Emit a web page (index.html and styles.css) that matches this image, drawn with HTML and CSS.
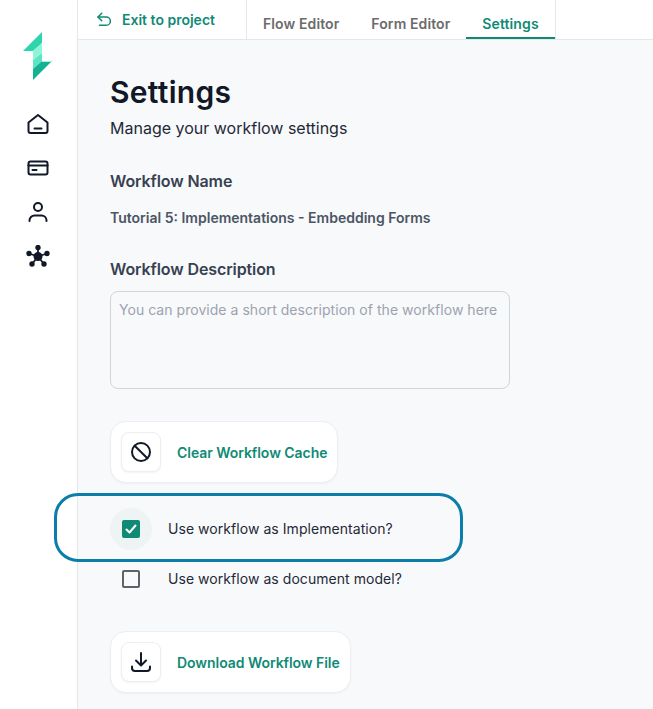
FILE: index.html
```html
<!DOCTYPE html>
<html lang="en">
<head>
<meta charset="utf-8">
<title>Settings</title>
<link rel="stylesheet" href="styles.css">
</head>
<body>
<div class="app">
  <aside class="sidebar">
    <svg class="logo" width="30" height="48" viewBox="0 0 30 48">
      <polygon points="19,0 0,19 10,19 19,11" fill="#2dd4ac"/>
      <polygon points="10,19 19,11 19,21 10,28" fill="#8df5d8"/>
      <polygon points="10,28 19,21 19,29 10,37" fill="#5ce5c4"/>
      <polygon points="10,37 19,29 29,29 10,48" fill="#14b294"/>
      <polygon points="19,29 29,29 28,30 19,30" fill="#a5f3e0"/>
    </svg>
    <nav class="side-nav">
      <svg class="side-icon" viewBox="0 0 24 24" fill="none" stroke="#111827" stroke-width="2" stroke-linecap="round" stroke-linejoin="round"><path d="M2.500 10.500 12 3l9.500 7.500V19a2 2 0 0 1-2 2h-15a2 2 0 0 1-2-2z"/><path d="M8.500 16.500h7"/></svg>
      <svg class="side-icon" viewBox="0 0 24 24" fill="none" stroke="#111827" stroke-width="2" stroke-linecap="round" stroke-linejoin="round"><rect x="2.500" y="5.500" width="19" height="13" rx="2"/><path d="M2.500 9.500h19" stroke-width="2.200"/><path d="M6.500 14h4"/></svg>
      <svg class="side-icon" viewBox="0 0 24 24" fill="none" stroke="#111827" stroke-width="2" stroke-linecap="round" stroke-linejoin="round"><circle cx="12" cy="7" r="4"/><path d="M3.500 21v-.500a5 5 0 0 1 5-5h7a5 5 0 0 1 5 5v.500"/></svg>
      <svg class="side-icon network" viewBox="0 0 24 24" fill="#111827" stroke="#111827" stroke-width="1.800"><path d="M12 11.500V2.500M12 11.500 3 8.500M12 11.500l9-3M12 11.500l-6 7.500M12 11.500l6 7.500" fill="none"/><circle cx="12" cy="11.500" r="3.600"/><circle cx="12" cy="2.500" r="1.800"/><circle cx="3" cy="8.500" r="1.800"/><circle cx="21" cy="8.500" r="1.800"/><circle cx="6" cy="19" r="1.800"/><circle cx="18" cy="19" r="1.800"/></svg>
    </nav>
  </aside>
  <div class="content">
    <header class="topbar">
      <a class="exit">
        <svg width="18" height="18" viewBox="0 0 24 24" fill="none" stroke="#0f8a75" stroke-width="2" stroke-linecap="round" stroke-linejoin="round"><path d="M9 3 4 8l5 5"/><path d="M4 8h11a5.500 5.500 0 0 1 0 11H6"/></svg>
        <span>Exit to project</span>
      </a>
      <div class="tabs">
        <a class="tab">Flow Editor</a>
        <a class="tab">Form Editor</a>
        <a class="tab tab-active">Settings</a>
      </div>
    </header>
    <main class="main">
      <h1 class="title">Settings</h1>
      <p class="subtitle">Manage your workflow settings</p>
      <h2 class="label name-label">Workflow Name</h2>
      <p class="wf-name">Tutorial 5: Implementations - Embedding Forms</p>
      <h2 class="label desc-label">Workflow Description</h2>
      <textarea class="desc" placeholder="You can provide a short description of the workflow here"></textarea>
      <button class="action clear">
        <span class="action-icon"><svg width="24" height="24" viewBox="0 0 24 24" fill="none" stroke="#111827" stroke-width="2" stroke-linecap="round"><circle cx="12" cy="12" r="9"/><path d="M5.700 5.700l12.600 12.600"/></svg></span>
        <span class="action-text">Clear Workflow Cache</span>
      </button>
      <label class="check-row first">
        <span class="check-halo"><span class="box box-on"><svg width="14" height="14" viewBox="0 0 14 14" fill="none" stroke="#fff" stroke-width="2" stroke-linecap="round" stroke-linejoin="round"><path d="M2.500 7.500 5.500 10.500 11.500 3.500"/></svg></span></span>
        <span class="check-text">Use workflow as Implementation?</span>
      </label>
      <label class="check-row second">
        <span class="check-halo"><span class="box"></span></span>
        <span class="check-text">Use workflow as document model?</span>
      </label>
      <button class="action download">
        <span class="action-icon"><svg width="24" height="24" viewBox="0 0 24 24" fill="none" stroke="#111827" stroke-width="2" stroke-linecap="round" stroke-linejoin="round"><path d="M12 3v12M7 10.500l5 5 5-5"/><path d="M3 16.500v1.500a3 3 0 0 0 3 3h12a3 3 0 0 0 3-3v-1.500"/></svg></span>
        <span class="action-text">Download Workflow File</span>
      </button>
      <div class="highlight"></div>
    </main>
  </div>
</div>
</body>
</html>
```
FILE: styles.css
```css
* { box-sizing: border-box; }
html, body { margin: 0; height: 100%; overflow: hidden; }
body { font-family: Inter, "Liberation Sans", sans-serif; background: #fff; color: #111827; }
.app { display: flex; height: 709px; }
.sidebar { width: 78px; flex: none; background: #fff; border-right: 1px solid #e5e7eb; display: flex; flex-direction: column; align-items: center; padding: 32px 1px 0 0; }
.logo { display: block; }
.side-nav { display: flex; flex-direction: column; gap: 20px; margin-top: 32px; }
.side-icon { width: 24px; height: 24px; display: block; }
.network { margin-top: 1px; }
.content { flex: 1; min-width: 0; display: flex; flex-direction: column; background: #f8f9fb; }
.topbar { height: 40px; flex: none; background: #fff; border-bottom: 1px solid #e5e7eb; display: flex; }
.exit { width: 169px; display: flex; align-items: flex-start; gap: 9px; padding: 11px 0 0 17px; border-right: 1px solid #e5e7eb; color: #0f8a75; font-size: 14px; font-weight: 600; line-height: 18px; }
.tabs { display: flex; height: 39px; }
.tab { font-size: 14px; font-weight: 600; letter-spacing: .1px; color: #6b6b6b; line-height: 18px; padding: 15px 16px 0; }
.tab-active { color: #0f8a75; border-bottom: 2px solid #0f8a75; box-shadow: 1px 0 0 #e5e7eb; }
.main { flex: 1; position: relative; padding: 34px 0 0 32px; }
.title { margin: 0; font-size: 30px; font-weight: 600; line-height: 36px; letter-spacing: .3px; color: #111827; }
.subtitle { margin: 6px 0 0; font-size: 16px; line-height: 24px; color: #1f2937; }
.label { margin: 0; font-size: 16px; font-weight: 600; line-height: 24px; letter-spacing: -.1px; color: #374151; }
.name-label { margin-top: 29px; }
.wf-name { margin: 15px 0 0; font-size: 14px; font-weight: 600; line-height: 20px; color: #4b5563; }
.desc-label { margin-top: 29px; }
.desc { display: block; margin-top: 10px; width: 400px; height: 98px; padding: 8px; border: 1px solid #d1d5db; border-radius: 8px; background: transparent; font: 400 14px/20px Inter, sans-serif; letter-spacing: .04px; resize: none; }
.desc::placeholder { color: #9ca3af; opacity: 1; }
.action { display: flex; align-items: center; gap: 16px; height: 62px; padding: 0 10px; background: #fff; border: 1px solid #eceef1; border-radius: 16px; font-family: inherit; font-size: 14px; font-weight: 600; letter-spacing: -.05px; color: #0f8a75; box-shadow: 0 1px 2px rgba(0,0,0,.04); }
.clear { margin-top: 32px; }
.download { margin-top: 31px; }
.action-icon { width: 40px; height: 40px; display: flex; align-items: center; justify-content: center; background: #fff; border: 1px solid #eceef1; border-radius: 8px; box-shadow: 0 1px 2px rgba(0,0,0,.05); }
.action-icon svg { display: block; }
.check-row { display: flex; align-items: center; gap: 16px; font-size: 14px; line-height: 20px; letter-spacing: .05px; color: #1f2937; }
.first { margin-top: 25px; }
.second { margin-top: 8px; }
.check-halo { width: 42px; height: 42px; border-radius: 50%; display: flex; align-items: center; justify-content: center; }
.first .check-halo { background: #eef3f3; }
.box { width: 18px; height: 18px; border: 2px solid #5f6368; border-radius: 2px; display: flex; align-items: center; justify-content: center; }
.box-on { background: #0f8a75; border-color: #0f8a75; }
.highlight { position: absolute; left: -24px; top: 453px; width: 409px; height: 69px; border: 3px solid #0a7ea8; border-radius: 24px; pointer-events: none; }
```
